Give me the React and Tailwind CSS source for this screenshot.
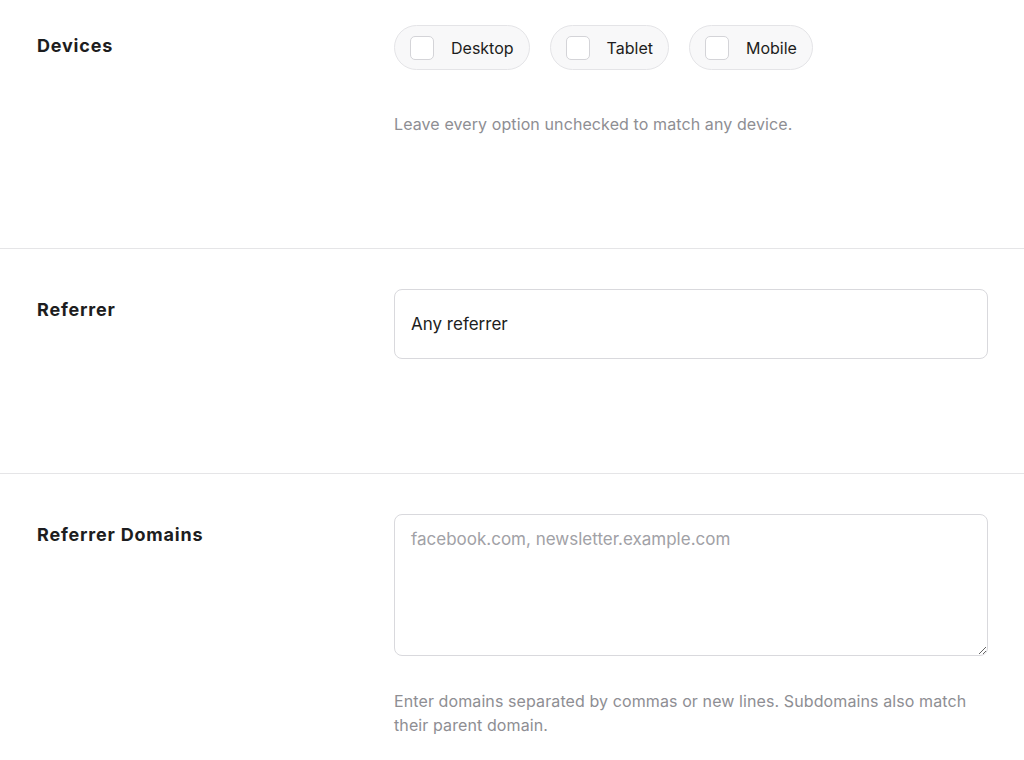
import React from "react";

const devices = ["Desktop", "Tablet", "Mobile"];

function Row({ label, children, className = "" }) {
	return (
		<div className={`flex pl-[37px] pr-[36px] ${className}`}>
			<div className="w-[357px] shrink-0 pt-[9px]">
				<h3 className="text-[18px] leading-6 font-bold tracking-[0.8px] text-[#1d1d20]">{label}</h3>
			</div>
			<div className="flex-1 min-w-0">{children}</div>
		</div>
	);
}

export default function App() {
	return (
		<div className="min-h-[760px] bg-white" style={{ fontFamily: "Inter, 'Noto Sans', sans-serif" }}>
			{/* DEVICES */}
			<Row label="Devices" className="pt-[25px] h-[249px] border-b border-[#e5e5e7]">
				<div className="flex gap-5">
					{devices.map((d) => (
						<label key={d} className="flex items-center gap-[17px] h-[45px] pl-[15px] pr-[15px] rounded-full bg-[#f8f8f9] border border-[#e4e4e7] cursor-pointer">
							<input type="checkbox" className="peer sr-only" />
							<span className="w-6 h-6 rounded-[5px] bg-white border border-[#d4d4d8]"></span>
							<span className="text-[16px] text-[#1d1d20]">{d}</span>
						</label>
					))}
				</div>
				<p className="mt-[42px] text-[16px] leading-6 tracking-[0.1px] text-[#8e8e93]">Leave every option unchecked to match any device.</p>
			</Row>

			{/* REFERRER */}
			<Row label="Referrer" className="pt-[40px] h-[225px] border-b border-[#e5e5e7]">
				<input
					type="text"
					defaultValue="Any referrer"
					className="w-full h-[70px] px-4 rounded-lg border border-[#d9d9dd] text-[17px] text-[#1d1d20] outline-none"
				/>
			</Row>

			{/* REFERRER DOMAINS */}
			<Row label="Referrer Domains" className="pt-[40px] pb-6">
				<textarea
					placeholder="facebook.com, newsletter.example.com"
					className="block w-full h-[142px] px-4 py-3 rounded-lg border border-[#d9d9dd] text-[17px] leading-6 text-[#1d1d20] placeholder:text-[#a1a1a6] outline-none resize-y"
				></textarea>
				<p className="mt-[33px] text-[16px] leading-6 tracking-[0.1px] text-[#8e8e93]">
					Enter domains separated by commas or new lines. Subdomains also match their parent domain.
				</p>
			</Row>
		</div>
	);
}
